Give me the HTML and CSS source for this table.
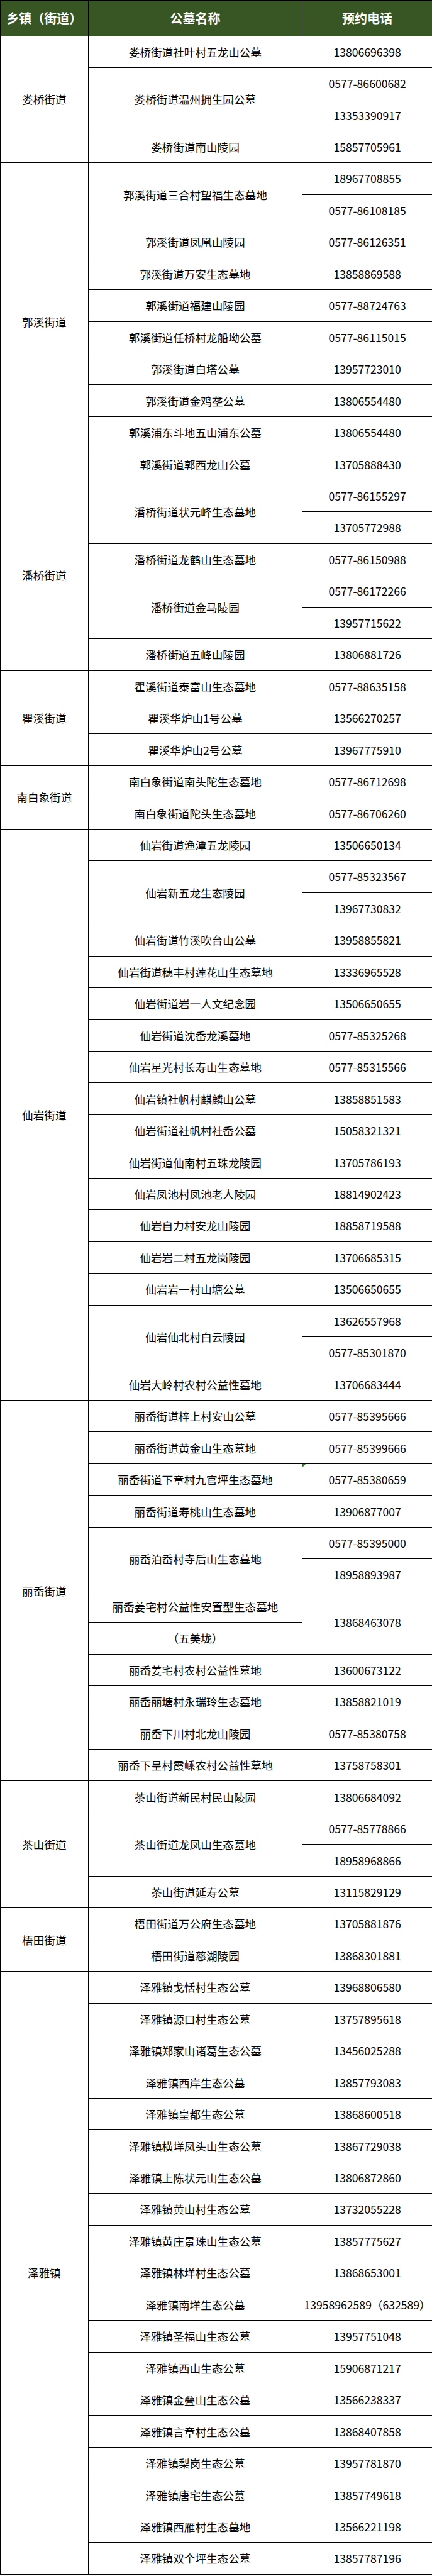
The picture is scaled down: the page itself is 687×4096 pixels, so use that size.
FILE: index.html
```html
<!DOCTYPE html>
<html lang="zh-CN">
<head>
<meta charset="utf-8">
<title>公墓预约电话</title>
<link rel="stylesheet" href="styles.css">
</head>
<body>
<table class="grid">
<colgroup><col class="c-town"><col class="c-name"><col class="c-tel"></colgroup>
<thead>
<tr class="head"><th>乡镇（街道）</th><th>公墓名称</th><th>预约电话</th></tr>
</thead>
<tbody>
<tr><td rowspan="4">娄桥街道</td><td>娄桥街道社叶村五龙山公墓</td><td>13806696398</td></tr>
<tr><td rowspan="2">娄桥街道温州拥生园公墓</td><td>0577-86600682</td></tr>
<tr><td>13353390917</td></tr>
<tr><td>娄桥街道南山陵园</td><td>15857705961</td></tr>

<tr><td rowspan="10">郭溪街道</td><td rowspan="2">郭溪街道三合村望福生态墓地</td><td>18967708855</td></tr>
<tr><td>0577-86108185</td></tr>
<tr><td>郭溪街道凤凰山陵园</td><td>0577-86126351</td></tr>
<tr><td>郭溪街道万安生态墓地</td><td>13858869588</td></tr>
<tr><td>郭溪街道福建山陵园</td><td>0577-88724763</td></tr>
<tr><td>郭溪街道任桥村龙船坳公墓</td><td>0577-86115015</td></tr>
<tr><td>郭溪街道白塔公墓</td><td>13957723010</td></tr>
<tr><td>郭溪街道金鸡垄公墓</td><td>13806554480</td></tr>
<tr><td>郭溪浦东斗地五山浦东公墓</td><td>13806554480</td></tr>
<tr><td>郭溪街道郭西龙山公墓</td><td>13705888430</td></tr>

<tr><td rowspan="6">潘桥街道</td><td rowspan="2">潘桥街道状元峰生态墓地</td><td>0577-86155297</td></tr>
<tr><td>13705772988</td></tr>
<tr><td>潘桥街道龙鹤山生态墓地</td><td>0577-86150988</td></tr>
<tr><td rowspan="2">潘桥街道金马陵园</td><td>0577-86172266</td></tr>
<tr><td>13957715622</td></tr>
<tr><td>潘桥街道五峰山陵园</td><td>13806881726</td></tr>

<tr><td rowspan="3">瞿溪街道</td><td>瞿溪街道泰富山生态墓地</td><td>0577-88635158</td></tr>
<tr><td>瞿溪华炉山1号公墓</td><td>13566270257</td></tr>
<tr><td>瞿溪华炉山2号公墓</td><td>13967775910</td></tr>

<tr><td rowspan="2">南白象街道</td><td>南白象街道南头陀生态墓地</td><td>0577-86712698</td></tr>
<tr><td>南白象街道陀头生态墓地</td><td>0577-86706260</td></tr>

<tr><td rowspan="18">仙岩街道</td><td>仙岩街道渔潭五龙陵园</td><td>13506650134</td></tr>
<tr><td rowspan="2">仙岩新五龙生态陵园</td><td>0577-85323567</td></tr>
<tr><td>13967730832</td></tr>
<tr><td>仙岩街道竹溪吹台山公墓</td><td>13958855821</td></tr>
<tr><td>仙岩街道穗丰村莲花山生态墓地</td><td>13336965528</td></tr>
<tr><td>仙岩街道岩一人文纪念园</td><td>13506650655</td></tr>
<tr><td>仙岩街道沈岙龙溪墓地</td><td>0577-85325268</td></tr>
<tr><td>仙岩星光村长寿山生态墓地</td><td>0577-85315566</td></tr>
<tr><td>仙岩镇社帆村麒麟山公墓</td><td>13858851583</td></tr>
<tr><td>仙岩街道社帆村社岙公墓</td><td>15058321321</td></tr>
<tr><td>仙岩街道仙南村五珠龙陵园</td><td>13705786193</td></tr>
<tr><td>仙岩凤池村凤池老人陵园</td><td>18814902423</td></tr>
<tr><td>仙岩自力村安龙山陵园</td><td>18858719588</td></tr>
<tr><td>仙岩岩二村五龙岗陵园</td><td>13706685315</td></tr>
<tr><td>仙岩岩一村山塘公墓</td><td>13506650655</td></tr>
<tr><td rowspan="2">仙岩仙北村白云陵园</td><td>13626557968</td></tr>
<tr><td>0577-85301870</td></tr>
<tr><td>仙岩大岭村农村公益性墓地</td><td>13706683444</td></tr>

<tr><td rowspan="12">丽岙街道</td><td>丽岙街道梓上村安山公墓</td><td>0577-85395666</td></tr>
<tr><td>丽岙街道黄金山生态墓地</td><td>0577-85399666</td></tr>
<tr><td>丽岙街道下章村九官坪生态墓地</td><td class="flag">0577-85380659</td></tr>
<tr><td>丽岙街道寿桃山生态墓地</td><td>13906877007</td></tr>
<tr><td rowspan="2">丽岙泊岙村寺后山生态墓地</td><td>0577-85395000</td></tr>
<tr><td>18958893987</td></tr>
<tr><td>丽岙姜宅村公益性安置型生态墓地</td><td rowspan="2">13868463078</td></tr>
<tr><td>（五美垅）</td></tr>
<tr><td>丽岙姜宅村农村公益性墓地</td><td>13600673122</td></tr>
<tr><td>丽岙丽塘村永瑞玲生态墓地</td><td>13858821019</td></tr>
<tr><td>丽岙下川村北龙山陵园</td><td>0577-85380758</td></tr>
<tr><td>丽岙下呈村霞嵊农村公益性墓地</td><td>13758758301</td></tr>

<tr><td rowspan="4">茶山街道</td><td>茶山街道新民村民山陵园</td><td>13806684092</td></tr>
<tr><td rowspan="2">茶山街道龙凤山生态墓地</td><td>0577-85778866</td></tr>
<tr><td>18958968866</td></tr>
<tr><td>茶山街道延寿公墓</td><td>13115829129</td></tr>

<tr><td rowspan="2">梧田街道</td><td>梧田街道万公府生态墓地</td><td>13705881876</td></tr>
<tr><td>梧田街道慈湖陵园</td><td>13868301881</td></tr>

<tr><td rowspan="19">泽雅镇</td><td>泽雅镇戈恬村生态公墓</td><td>13968806580</td></tr>
<tr><td>泽雅镇源口村生态公墓</td><td>13757895618</td></tr>
<tr><td>泽雅镇郑家山诸葛生态公墓</td><td>13456025288</td></tr>
<tr><td>泽雅镇西岸生态公墓</td><td>13857793083</td></tr>
<tr><td>泽雅镇皇都生态公墓</td><td>13868600518</td></tr>
<tr><td>泽雅镇横垟凤头山生态公墓</td><td>13867729038</td></tr>
<tr><td>泽雅镇上陈状元山生态公墓</td><td>13806872860</td></tr>
<tr><td>泽雅镇黄山村生态公墓</td><td>13732055228</td></tr>
<tr><td>泽雅镇黄庄景珠山生态公墓</td><td>13857775627</td></tr>
<tr><td>泽雅镇林垟村生态公墓</td><td>13868653001</td></tr>
<tr><td>泽雅镇南垟生态公墓</td><td>13958962589（632589）</td></tr>
<tr><td>泽雅镇圣福山生态公墓</td><td>13957751048</td></tr>
<tr><td>泽雅镇西山生态公墓</td><td>15906871217</td></tr>
<tr><td>泽雅镇金叠山生态公墓</td><td>13566238337</td></tr>
<tr><td>泽雅镇言章村生态公墓</td><td>13868407858</td></tr>
<tr><td>泽雅镇梨岗生态公墓</td><td>13957781870</td></tr>
<tr><td>泽雅镇唐宅生态公墓</td><td>13857749618</td></tr>
<tr><td>泽雅镇西雁村生态墓地</td><td>13566221198</td></tr>
<tr><td>泽雅镇双个坪生态公墓</td><td>13857787196</td></tr>
</tbody>
</table>
</body>
</html>
```

FILE: styles.css
```css
html, body {
  margin: 0;
  padding: 0;
  background: #ffffff;
}

.grid {
  width: 687px;
  border-collapse: collapse;
  table-layout: fixed;
  font-family: "Noto Sans CJK SC", "Noto Sans", sans-serif;
  color: #000000;
}

.c-town { width: 139.6px; }
.c-name { width: 340.6px; }
.c-tel  { width: 206.8px; }

.grid th,
.grid td {
  border: 1px solid #000000;
  padding: 0;
  text-align: center;
  vertical-align: middle;
  line-height: 1.2;
  white-space: nowrap;
}

.grid .head th {
  height: 55.5px;
  background: #375623;
  color: #ffffff;
  font-size: 20px;
  font-weight: 700;
}

.grid tbody tr {
  height: 50.46px;
}

.grid td {
  font-size: 17.6px;
  font-weight: 400;
}

.grid td.flag {
  position: relative;
}

.grid td.flag::before {
  content: "";
  position: absolute;
  left: 0;
  top: 0;
  border-top: 5px solid #1a8a1a;
  border-right: 5px solid transparent;
}
```
